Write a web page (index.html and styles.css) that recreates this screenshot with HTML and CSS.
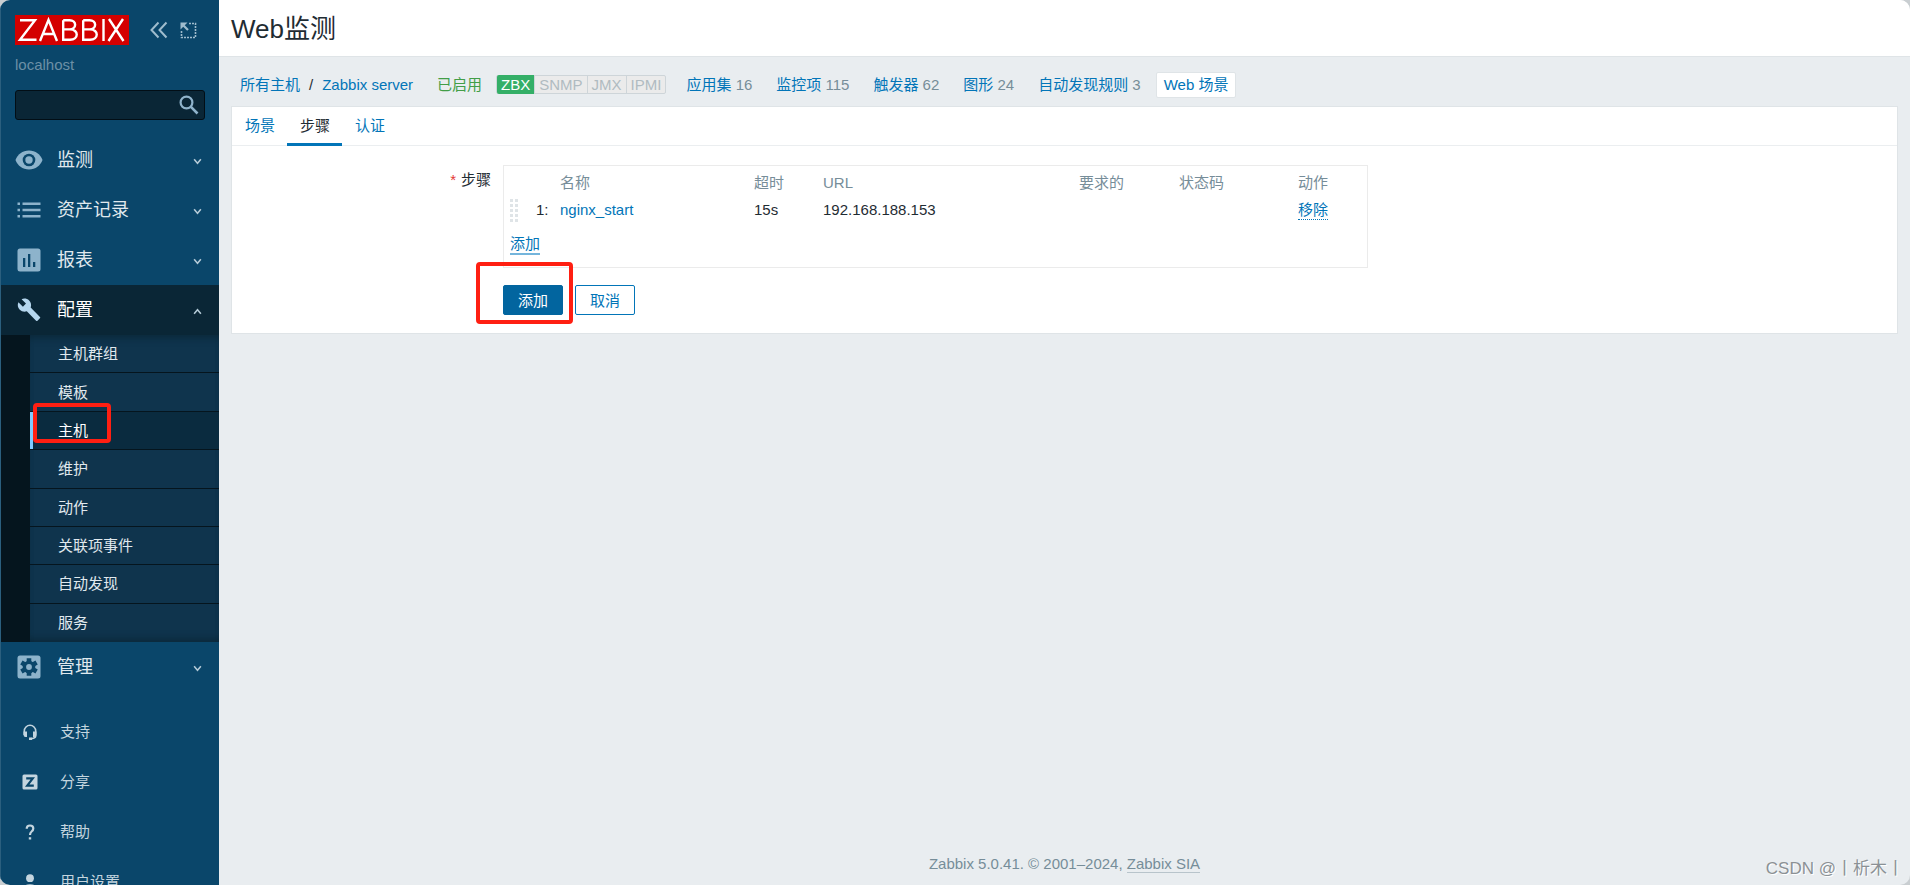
FILE: index.html
```html
<!DOCTYPE html>
<html lang="zh-CN">
<head>
<meta charset="utf-8">
<title>Web监测</title>
<link rel="stylesheet" href="styles.css">
</head>
<body>
<div class="window">
<aside class="sidebar">
  <div class="brand">
    <svg class="logo" width="114" height="30" viewBox="0 0 114 30" role="img" aria-label="ZABBIX"><rect width="114" height="30" fill="#d40000"/><g fill="none" stroke="#fff" stroke-width="2.4"><path d="M5 5.200H20L5 24.800H21.500"/><path d="M25 26L33.500 5L42 26M28 19H39"/><path d="M48.200 5.200V24.800H55C64 24.800 64 14.400 55 14.400H48.200M48.200 5.200H54.500C62 5.200 62 14.400 54.500 14.400"/><path d="M68.200 5.200V24.800H75C84 24.800 84 14.400 75 14.400H68.200M68.200 5.200H74.500C82 5.200 82 14.400 74.500 14.400"/><path d="M88.500 4V26M94 4L108.500 26M108 4L93.500 26"/></g></svg>
    <button class="icon-btn" aria-label="收起"><svg width="18" height="18" viewBox="0 0 18 18" fill="none" stroke="#9fbccd" stroke-width="2"><path d="M8.500 1.500L1.500 9L8.500 16.500M16.500 1.500L9.500 9L16.500 16.500"/></svg></button>
    <button class="icon-btn" aria-label="隐藏"><svg width="17" height="17" viewBox="0 0 17 17" fill="none" stroke="#9fbccd"><path stroke-width="1.600" stroke-dasharray="2 1" d="M9 1.500H15.500V15.500H1.500V9"/><path stroke-width="2.200" d="M3 3L8 8"/><path fill="#9fbccd" stroke="none" d="M.5.500H7.500L.5 7.500Z"/></svg></button>
  </div>
  <div class="server-name">localhost</div>
  <form class="search">
    <input type="text" aria-label="搜索">
    <button type="button" aria-label="搜索"><svg width="20" height="20" viewBox="0 0 20 20" fill="none" stroke="#8fb3cb"><circle cx="7.500" cy="7.500" r="5.900" stroke-width="2.200"/><path stroke-width="2.600" d="M11.700 11.700L18.500 18.500"/></svg></button>
  </form>
  <nav>
    <ul class="menu">
      <li><a href="#" class="menu-link"><svg class="menu-icon" viewBox="0 0 28 28"><path fill="#8db3cb" d="M14 4.500C7.500 4.500 2.500 8.500.5 14C2.500 19.500 7.500 23.500 14 23.500S25.500 19.500 27.500 14C25.500 8.500 20.500 4.500 14 4.500Z"/><circle cx="14" cy="14" r="6.300" fill="#0a466a"/><circle cx="14" cy="14" r="3.700" fill="#8db3cb"/></svg><span>监测</span><svg class="arrow" viewBox="0 0 8 6"><path d="M1 1L4 4.500L7 1"/></svg></a></li>
      <li><a href="#" class="menu-link"><svg class="menu-icon" viewBox="0 0 28 28" fill="#8db3cb"><path d="M2.500 6.500H5V9H2.500ZM7.500 6.500H25.500V9H7.500ZM2.500 12.700H5V15.200H2.500ZM7.500 12.700H25.500V15.200H7.500ZM2.500 19H5V21.500H2.500ZM7.500 19H25.500V21.500H7.500Z"/></svg><span>资产记录</span><svg class="arrow" viewBox="0 0 8 6"><path d="M1 1L4 4.500L7 1"/></svg></a></li>
      <li><a href="#" class="menu-link"><svg class="menu-icon" viewBox="0 0 28 28"><rect x="2.500" y="2.500" width="23" height="23" rx="2.500" fill="#8db3cb"/><path fill="#0a466a" d="M8 12H10.300V21H8ZM13 8H15.300V21H13ZM18 16H20.300V21H18Z"/></svg><span>报表</span><svg class="arrow" viewBox="0 0 8 6"><path d="M1 1L4 4.500L7 1"/></svg></a></li>
      <li><a href="#" class="menu-link open"><svg class="menu-icon" viewBox="0 0 28 28"><path fill="#b5d6ee" transform="translate(1.800 1.500) scale(1.020)" d="M22.700 19L13.600 9.900C14.500 7.600 14 4.900 12.100 3C10.100 1 7.100.6 4.700 1.700L9 6L6 9L1.600 4.700C.4 7.100.9 10.100 2.900 12.100C4.800 14 7.500 14.500 9.800 13.600L18.900 22.700C19.300 23.100 19.900 23.100 20.300 22.700L22.600 20.400C23.100 20 23.100 19.300 22.700 19Z"/></svg><span>配置</span><svg class="arrow" viewBox="0 0 8 6"><path d="M1 5L4 1.500L7 5"/></svg></a>
        <ul class="submenu">
          <li><a href="#">主机群组</a></li>
          <li><a href="#">模板</a></li>
          <li class="marked"><a href="#" class="selected">主机</a><span class="highlight"></span></li>
          <li><a href="#">维护</a></li>
          <li><a href="#">动作</a></li>
          <li><a href="#">关联项事件</a></li>
          <li><a href="#">自动发现</a></li>
          <li><a href="#">服务</a></li>
        </ul>
      </li>
      <li><a href="#" class="menu-link"><svg class="menu-icon" viewBox="0 0 28 28"><rect x="2.500" y="2.500" width="23" height="23" rx="2.500" fill="#8db3cb"/><circle cx="14" cy="14" r="6.300" fill="#0a466a"/><path stroke="#0a466a" stroke-width="4.600" d="M14 5.200V22.800M6.400 9.600L21.600 18.400M6.400 18.400L21.600 9.600"/><circle cx="14" cy="14" r="2.900" fill="#8db3cb"/></svg><span>管理</span><svg class="arrow" viewBox="0 0 8 6"><path d="M1 1L4 4.500L7 1"/></svg></a></li>
    </ul>
    <ul class="user-menu">
      <li><a href="#"><svg viewBox="0 0 16 16"><path fill="none" stroke="#c4d5df" stroke-width="1.600" d="M2.300 11V7A5.700 5.700 0 0 1 13.700 7V12Q13.700 14.500 8 14.700"/><path fill="#c4d5df" d="M1.500 7.500H5V13H3.500Q1.500 13 1.500 10.500ZM11 7.500H14.500V10.500Q14.500 13 12.500 13H11ZM7 13.500H10V16H7Z"/></svg>支持</a></li>
      <li><a href="#"><svg viewBox="0 0 16 16"><rect x=".5" y=".5" width="15" height="15" rx="1.500" fill="#c4d5df"/><path fill="none" stroke="#0a466a" stroke-width="2.200" d="M4.200 4.300H10.800L5.200 11.700H11.800"/></svg>分享</a></li>
      <li><a href="#"><svg viewBox="0 0 16 16"><path fill="none" stroke="#c4d5df" stroke-width="2.200" d="M4.700 4.800Q4.700 1.500 8 1.500Q11.300 1.500 11.300 4.500Q11.300 6.200 9.600 7.500Q8 8.800 8 11"/><path fill="#c4d5df" d="M6.800 13.200H9.200V15.600H6.800Z"/></svg>帮助</a></li>
      <li><a href="#"><svg viewBox="0 0 16 16" fill="#c4d5df"><circle cx="8" cy="4.200" r="3.900"/><path d="M1.500 16V14Q1.500 10.300 8 10.300Q14.500 10.300 14.500 14V16Z"/></svg>用户设置</a></li>
    </ul>
  </nav>
</aside>
<main class="content">
  <header class="page-title"><h1>Web监测</h1></header>
  <nav class="crumbs">
    <a href="#">所有主机</a><span class="slash">/</span><a href="#">Zabbix server</a>
    <span class="enabled">已启用</span>
    <span class="status"><span class="on">ZBX</span><span>SNMP</span><span>JMX</span><span>IPMI</span></span>
    <span class="links">
      <span><a href="#">应用集</a> 16</span>
      <span><a href="#">监控项</a> 115</span>
      <span><a href="#">触发器</a> 62</span>
      <span><a href="#">图形</a> 24</span>
      <span><a href="#">自动发现规则</a> 3</span>
    </span>
    <a href="#" class="current">Web 场景</a>
  </nav>
  <section class="panel">
    <nav class="tabs"><a href="#">场景</a><a href="#" class="active">步骤</a><a href="#">认证</a></nav>
    <form class="form">
      <div class="label"><span class="star">*</span>步骤</div>
      <div class="field">
        <div class="steps">
          <table>
            <thead><tr><th class="c-handle"></th><th class="c-num"></th><th class="c-name">名称</th><th class="c-time">超时</th><th class="c-url">URL</th><th class="c-req">要求的</th><th class="c-code">状态码</th><th>动作</th></tr></thead>
            <tbody>
              <tr><td><svg class="handle" width="8" height="23" viewBox="0 0 8 23" fill="#dfe4e7"><path d="M0 0H3V3H0ZM5 0H8V3H5ZM0 5H3V8H0ZM5 5H8V8H5ZM0 10H3V13H0ZM5 10H8V13H5ZM0 15H3V18H0ZM5 15H8V18H5ZM0 20H3V23H0ZM5 20H8V23H5Z"/></svg></td><td class="num">1:</td><td><a href="#">nginx_start</a></td><td>15s</td><td>192.168.188.153</td><td></td><td></td><td><button type="button" class="link dotted">移除</button></td></tr>
            </tbody>
          </table>
          <button type="button" class="link add">添加</button>
        </div>
        <div class="buttons"><button type="button" class="btn primary">添加</button><button type="button" class="btn">取消</button><span class="highlight"></span></div>
      </div>
    </form>
  </section>
  <footer>Zabbix 5.0.41. © 2001–2024, <a href="#">Zabbix SIA</a><span class="watermark">CSDN @丨析木丨</span></footer>
</main>
</div>
</body>
</html>
```
FILE: styles.css
```css
* { box-sizing: border-box; }
body {
  margin: 0;
  background: #c9ced1;
  color: #1f2c33;
  font: 15px/20px "Liberation Sans", "Noto Sans CJK SC", sans-serif;
}
a { color: #0275b8; text-decoration: none; }
ul { list-style: none; margin: 0; padding: 0; }
button, input { font: inherit; margin: 0; }
button { cursor: pointer; }
svg { display: block; flex: none; }

.window {
  display: flex;
  height: 100vh;
  overflow: hidden;
  border-radius: 10px;
  background: #e9edf0;
}

/* Sidebar */
.sidebar {
  width: 219px;
  flex: none;
  background: #0a466a;
  border-left: 1px solid #2b5f7e;
  overflow: hidden;
}
.brand { display: flex; align-items: center; padding: 15px 0 0 14px; }
.icon-btn { border: 0; background: none; padding: 0; margin-left: 21px; }
.icon-btn + .icon-btn { margin-left: 12px; }
.server-name { padding: 10px 14px 0; color: #6c90a6; }
.search {
  display: flex;
  align-items: center;
  height: 30px;
  margin: 15px 14px 15px 14px;
  background: #0a2636;
  border: 1px solid #020e16;
  border-radius: 3px;
}
.search input { flex: 1; min-width: 0; height: 28px; background: none; border: 0; outline: 0; color: #fff; }
.search button { border: 0; background: none; padding: 0 5px 0 0; }
.menu-link {
  display: flex;
  align-items: center;
  height: 50px;
  padding: 0 17px 0 14px;
  font-size: 18px;
  color: #e0e9ee;
}
.menu-link.open { background: #0a2636; color: #fff; }
.menu-icon { width: 28px; height: 28px; margin-right: 14px; }
.menu-link span { flex: 1; }
.arrow { width: 9px; height: 7px; fill: none; stroke: #b4cad7; stroke-width: 1.4; margin-top: 3px; }
.submenu {
  display: grid;
  grid-template-rows: repeat(8, 1fr);
  height: 307px;
  border-left: 29px solid #05151e;
  background: #0f344d;
  box-shadow: inset 0 8px 8px -6px #0a2636, inset 0 -8px 8px -6px #0a2636;
}
.submenu li { border-bottom: 1px solid #05151e; }
.submenu li:last-child { border-bottom: 0; }
.submenu a { display: flex; align-items: center; height: 100%; padding: 1px 0 0 28px; color: #e0e9ee; }
.submenu .selected { padding-left: 25px; border-left: 3px solid #80caff; background: #0a2b3f; color: #fff; }
.marked, .buttons { position: relative; }
.highlight { position: absolute; border: 4px solid #ff1f12; border-radius: 4px; pointer-events: none; }
.marked .highlight { left: 3px; top: -9px; width: 78px; height: 40px; }
.buttons .highlight { left: -27px; top: -23px; width: 97px; height: 62px; }
.user-menu { padding-top: 15px; }
.user-menu a { display: flex; align-items: center; height: 50px; padding-left: 21px; gap: 22px; color: #c4d5df; }
.user-menu svg { width: 16px; height: 16px; }

/* Content */
.content { flex: 1; min-width: 0; display: flex; flex-direction: column; }
.page-title { height: 57px; padding: 0 12px; background: #fff; border-bottom: 1px solid #dfe4e7; }
h1 { margin: 0; font-size: 26px; font-weight: 400; line-height: 58px; }
.crumbs { display: flex; align-items: center; height: 49px; padding: 6px 21px 0; white-space: nowrap; }
.slash { margin: 0 9px; }
.enabled { color: #429e47; margin-left: 24px; }
.status {
  display: flex;
  margin-left: 14px;
  line-height: 17px;
  color: #b0bbc1;
  background: #ebebeb;
  border: 1px solid #ced5d9;
  border-radius: 2px;
}
.status span { padding: 0 4px; border-left: 1px solid #ced5d9; }
.status .on { margin: -1px 0; padding: 1px 4px; background: #34af67; color: #fff; border: 0; border-radius: 2px 0 0 2px; }
.links { display: flex; gap: 24px; margin-left: 20px; color: #768d99; }
.current { margin-left: 15px; padding: 2px 7px; background: #fff; border: 1px solid #dfe4e7; border-radius: 2px; }

.panel { margin: 0 12px; background: #fff; border: 1px solid #dfe4e7; }
.tabs { display: flex; height: 39px; border-bottom: 1px solid #ebeef0; }
.tabs a { padding: 9px 12px 0 13px; height: 39px; }
.tabs .active { color: #1f2c33; border-bottom: 3px solid #0275b8; }
.form { display: flex; padding: 19px 0 18px; gap: 12px; }
.label { width: 259px; text-align: right; padding-top: 5px; }
.star { color: #e33734; margin-right: 5px; }
.steps { width: 865px; height: 103px; padding: 6px 6px 0; border: 1px solid #ebebeb; }
table { width: 100%; table-layout: fixed; border-collapse: collapse; text-align: left; }
th { height: 22px; padding: 0; font-weight: 400; color: #768d99; }
td { height: 32px; padding: 0; }
.c-handle { width: 26px; }
.c-num { width: 24px; }
.c-name { width: 194px; }
.c-time { width: 69px; }
.c-url { width: 256px; }
.c-req { width: 100px; }
.c-code { width: 119px; }
.link { padding: 0; border: 0; background: none; color: #0275b8; line-height: 18px; }
.dotted { border-bottom: 1px dotted #0275b8; }
.add { display: block; margin-top: 9px; border-bottom: 2px solid #74b5dc; }
.buttons { display: flex; gap: 12px; margin-top: 17px; }
.btn { width: 60px; height: 30px; padding: 1px 0 0; border: 1px solid #0275b8; border-radius: 2px; background: #fff; color: #0275b8; }
.primary { background: #02659f; border-color: #02659f; color: #fff; }

footer { position: relative; margin-top: auto; padding-bottom: 11px; text-align: center; color: #768d99; }
footer a { color: #768d99; border-bottom: 1px solid #b8c4cb; }
.watermark { position: absolute; right: 6px; bottom: 6px; font-size: 17px; color: #8b9195; text-shadow: 1px 1px 0 #fff; }
```
